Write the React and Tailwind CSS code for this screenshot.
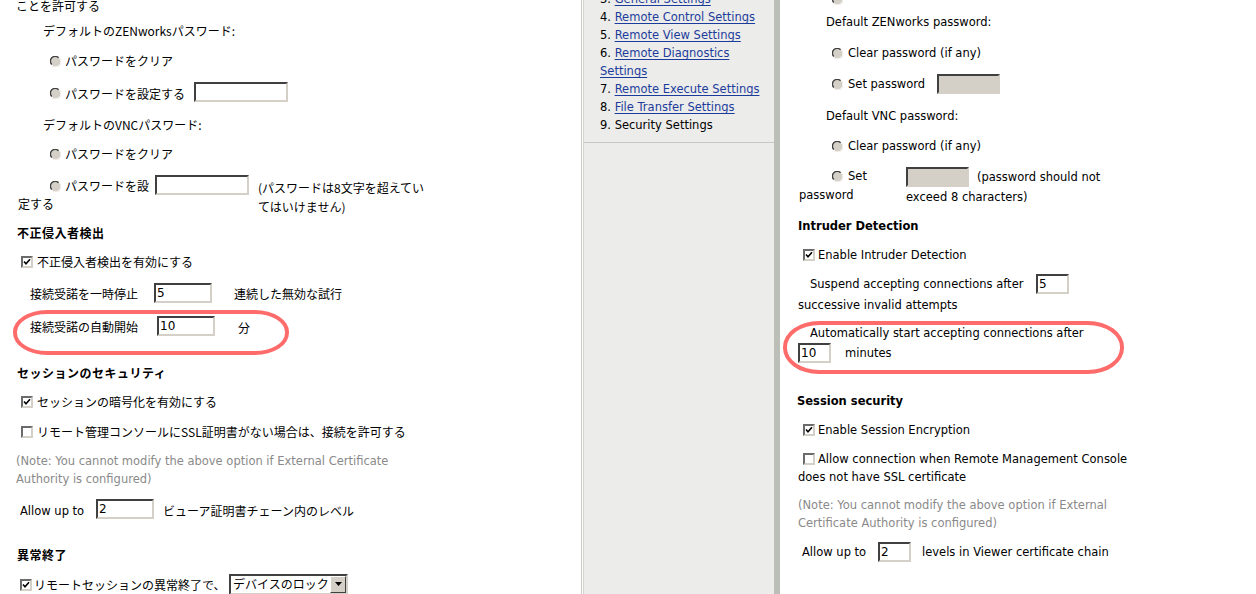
import React from 'react';

const EN = "font-['DejaVu_Sans',sans-serif] text-[11.5px] leading-[18px]";
const JP = "font-['Noto_Sans_CJK_JP',sans-serif] text-[12px] leading-[18px]";
const JPB = "font-['Noto_Sans_CJK_JP',sans-serif] text-[12px] leading-[18px] font-bold tracking-[0.5px]";
const ENB = "font-['DejaVu_Sans',sans-serif] text-[11.5px] leading-[18px] font-bold";

const Radio = () => (
  <svg width="11" height="11" viewBox="0 0 11 11" className="shrink-0">
    <circle cx="5.5" cy="5.5" r="5" fill="#d4d0c8" />
    <path d="M1.8 8.6 A4.6 4.6 0 0 1 8.6 1.8" stroke="#404040" strokeWidth="1.4" fill="none" />
    <path d="M2.2 9.6 A5 5 0 0 0 9.6 2.2" stroke="#eceae4" strokeWidth="1" fill="none" />
  </svg>
);

const Check = ({ on }) => (
  <span className="w-[12px] h-[12px] shrink-0 border-2 border-t-[#6b6b6b] border-l-[#6b6b6b] border-r-[#d4d0c8] border-b-[#d4d0c8] bg-white flex items-center justify-center">
    {on && (
      <svg width="8" height="8" viewBox="0 0 8 8">
        <path d="M1 3.5 L3 5.8 L7 1.2" stroke="#000" strokeWidth="1.6" fill="none" />
      </svg>
    )}
  </span>
);

const Field = ({ w, value, gray }) => (
  <div
    className={`h-[20px] shrink-0 border-2 border-t-[#404040] border-l-[#404040] border-r-[#d4d0c8] border-b-[#d4d0c8] pl-[1px] font-['DejaVu_Sans',sans-serif] text-[12px] leading-[16px] ${gray ? 'bg-[#d4d0c8]' : 'bg-white'}`}
    style={{ width: w }}
  >
    {value}
  </div>
);

const Oval = ({ className }) => (
  <div className={`absolute border-[4px] border-[#fe6b6b] pointer-events-none ${className}`} />
);

function LeftPanel() {
  return (
    <div className="w-[581px] shrink-0 bg-white flex flex-col text-black">
      <div className={`-mt-[4px] h-[20px] flex items-center pl-[16px] ${JP}`}>ことを許可する</div>
      <div className={`mt-[5px] h-[20px] flex items-center pl-[43px] ${JP}`}>デフォルトのZENworksパスワード:</div>
      <div className={`mt-[10px] h-[20px] flex items-center gap-[4px] pl-[50px] ${JP}`}>
        <Radio />
        <span>パスワードをクリア</span>
      </div>
      <div className={`mt-[11px] h-[20px] flex items-center ${JP}`}>
        <div className="w-[194px] flex items-center gap-[4px] pl-[50px] pt-[3px]">
          <Radio />
          <span>パスワードを設定する</span>
        </div>
        <Field w={94} />
      </div>
      <div className={`mt-[13px] h-[20px] flex items-center pl-[43px] ${JP}`}>デフォルトのVNCパスワード:</div>
      <div className={`mt-[9px] h-[20px] flex items-center gap-[4px] pl-[50px] ${JP}`}>
        <Radio />
        <span>パスワードをクリア</span>
      </div>
      <div className={`mt-[11px] h-[40px] flex items-start ${JP}`}>
        <div className="w-[155px] flex flex-col">
          <div className="h-[20px] flex items-center gap-[4px] pl-[50px] pt-[2px]">
            <Radio />
            <span>パスワードを設</span>
          </div>
          <div className="pl-[18px]">定する</div>
        </div>
        <Field w={94} />
        <div className="ml-[9px] pt-[3px] leading-[19px]">
          <div>(パスワードは8文字を超えてい</div>
          <div>てはいけません)</div>
        </div>
      </div>
      <div className={`mt-[8px] h-[20px] flex items-center pl-[17px] ${JPB}`}>不正侵入者検出</div>
      <div className={`mt-[9px] h-[20px] flex items-center gap-[4px] pl-[21px] ${JP}`}>
        <Check on />
        <span>不正侵入者検出を有効にする</span>
      </div>
      <div className={`mt-[11px] h-[20px] flex items-center ${JP}`}>
        <div className="w-[154px] pl-[30px] pt-[1px]">接続受諾を一時停止</div>
        <Field w={58} value="5" />
        <span className="ml-[22px] pt-[1px]">連続した無効な試行</span>
      </div>
      <div className={`relative mt-[13px] h-[20px] flex items-center ${JP}`}>
        <Oval className="left-[13px] -top-[6px] w-[276px] h-[45px] rounded-[34px/22px]" />
        <div className="w-[157px] pl-[30px] pt-[1px]">接続受諾の自動開始</div>
        <Field w={58} value="10" />
        <span className="ml-[23px] pt-[3px]">分</span>
      </div>
      <div className={`mt-[27px] h-[20px] flex items-center pl-[17px] ${JPB}`}>セッションのセキュリティ</div>
      <div className={`mt-[9px] h-[20px] flex items-center gap-[4px] pl-[21px] ${JP}`}>
        <Check on />
        <span>セッションの暗号化を有効にする</span>
      </div>
      <div className={`mt-[10px] h-[20px] flex items-center gap-[4px] pl-[21px] ${JP}`}>
        <Check />
        <span>リモート管理コンソールにSSL証明書がない場合は、接続を許可する</span>
      </div>
      <div className={`mt-[10px] pl-[16px] text-[#8a8a8a] ${EN}`}>
        <div>(Note: You cannot modify the above option if External Certificate</div>
        <div>Authority is configured)</div>
      </div>
      <div className="mt-[11px] h-[20px] flex items-center">
        <div className={`w-[96px] pl-[20px] pt-[3px] ${EN}`}>Allow up to</div>
        <Field w={58} value="2" />
        <span className={`ml-[9px] pt-[3px] ${JP}`}>ビューア証明書チェーン内のレベル</span>
      </div>
      <div className={`mt-[26px] h-[20px] flex items-center pl-[17px] ${JPB}`}>異常終了</div>
      <div className={`mt-[9px] h-[20px] flex items-center ${JP}`}>
        <div className="w-[229px] flex items-center gap-[2px] pl-[20px] pt-[1px]">
          <Check on />
          <span>リモートセッションの異常終了で、</span>
        </div>
        <div className="w-[119px] h-[21px] shrink-0 border-2 border-t-[#404040] border-l-[#404040] border-r-[#d4d0c8] border-b-[#d4d0c8] bg-white flex">
          <span className="flex-1 pl-[2px] leading-[16px]">デバイスのロック</span>
          <span className="w-[16px] h-[17px] bg-[#d4d0c8] border border-t-white border-l-white border-r-[#404040] border-b-[#404040] flex items-center justify-center">
            <svg width="7" height="4" viewBox="0 0 7 4">
              <path d="M0 0 H7 L3.5 4 Z" fill="#000" />
            </svg>
          </span>
        </div>
      </div>
    </div>
  );
}

function NavPanel() {
  const link = 'text-[#1c3c9c] underline underline-offset-[2px]';
  return (
    <div className="flex shrink-0">
      <div className="w-[1px] bg-[#c9c9c5]" />
      <div className="w-[1px] bg-white" />
      <div className="w-[1px] bg-[#d6d4ce]" />
      <div className="w-[190px] bg-[#ececea] flex flex-col">
        <div className={`-mt-[10px] pl-[16px] pr-[8px] pb-[8px] border-b border-[#c8c8c4] text-black ${EN}`}>
          <div>3. <span className={link}>General Settings</span></div>
          <div>4. <span className={link}>Remote Control Settings</span></div>
          <div>5. <span className={link}>Remote View Settings</span></div>
          <div>6. <span className={link}>Remote Diagnostics Settings</span></div>
          <div>7. <span className={link}>Remote Execute Settings</span></div>
          <div>8. <span className={link}>File Transfer Settings</span></div>
          <div>9. Security Settings</div>
        </div>
      </div>
      <div className="w-[6px] bg-[#bcbeb8]" />
    </div>
  );
}

function RightPanel() {
  return (
    <div className={`flex-1 bg-white flex flex-col text-black ${EN}`}>
      <div className="-mt-[11px] h-[20px] flex items-center pl-[52px]">
        <Radio />
      </div>
      <div className="mt-[3px] h-[20px] flex items-center pl-[46px]">Default ZENworks password:</div>
      <div className="mt-[11px] h-[20px] flex items-center gap-[5px] pl-[52px]">
        <Radio />
        <span>Clear password (if any)</span>
      </div>
      <div className="mt-[11px] h-[20px] flex items-center">
        <div className="w-[157px] flex items-center gap-[5px] pl-[52px]">
          <Radio />
          <span>Set password</span>
        </div>
        <Field w={63} gray />
      </div>
      <div className="mt-[12px] h-[20px] flex items-center pl-[46px]">Default VNC password:</div>
      <div className="mt-[10px] h-[20px] flex items-center gap-[5px] pl-[52px]">
        <Radio />
        <span>Clear password (if any)</span>
      </div>
      <div className="mt-[11px] h-[39px] flex items-start">
        <div className="w-[126px] flex flex-col">
          <div className="h-[18px] flex items-center gap-[5px] pl-[52px]">
            <Radio />
            <span>Set</span>
          </div>
          <div className="pl-[19px] pt-[1px]">password</div>
        </div>
        <div className="flex flex-col">
          <div className="h-[19px] flex items-center">
            <Field w={63} gray />
            <span className="ml-[8px] pt-[1px]">(password should not</span>
          </div>
          <div className="mt-[2px]">exceed 8 characters)</div>
        </div>
      </div>
      <div className={`mt-[10px] h-[20px] flex items-center pl-[18px] ${ENB}`}>Intruder Detection</div>
      <div className="mt-[9px] h-[20px] flex items-center gap-[3px] pl-[23px]">
        <Check on />
        <span>Enable Intruder Detection</span>
      </div>
      <div className="mt-[9px] h-[20px] flex items-center">
        <div className="w-[256px] pl-[30px]">Suspend accepting connections after</div>
        <Field w={33} value="5" />
      </div>
      <div className="mt-[2px] pl-[18px]">successive invalid attempts</div>
      <div className="relative mt-[10px] flex flex-col">
        <Oval className="left-[3px] -top-[3px] w-[341px] h-[53px] rounded-[36px/26px]" />
        <div className="pl-[30px]">Automatically start accepting connections after</div>
        <div className="mt-[1px] h-[20px] flex items-center pl-[18px]">
          <Field w={33} value="10" />
          <span className="ml-[14px]">minutes</span>
        </div>
      </div>
      <div className={`mt-[28px] h-[20px] flex items-center pl-[17px] ${ENB}`}>Session security</div>
      <div className="mt-[9px] h-[20px] flex items-center gap-[3px] pl-[23px]">
        <Check on />
        <span>Enable Session Encryption</span>
      </div>
      <div className="mt-[10px] flex flex-col">
        <div className="h-[18px] flex items-center gap-[3px] pl-[23px]">
          <Check />
          <span>Allow connection when Remote Management Console</span>
        </div>
        <div className="pl-[18px]">does not have SSL certificate</div>
      </div>
      <div className="mt-[10px] pl-[18px] text-[#8a8a8a]">
        <div>(Note: You cannot modify the above option if External</div>
        <div>Certificate Authority is configured)</div>
      </div>
      <div className="mt-[10px] h-[20px] flex items-center">
        <div className="w-[98px] pl-[22px]">Allow up to</div>
        <Field w={33} value="2" />
        <span className="ml-[11px]">levels in Viewer certificate chain</span>
      </div>
    </div>
  );
}

export default function App() {
  return (
    <div className="w-[1256px] h-[594px] overflow-hidden flex bg-white">
      <LeftPanel />
      <NavPanel />
      <RightPanel />
    </div>
  );
}
